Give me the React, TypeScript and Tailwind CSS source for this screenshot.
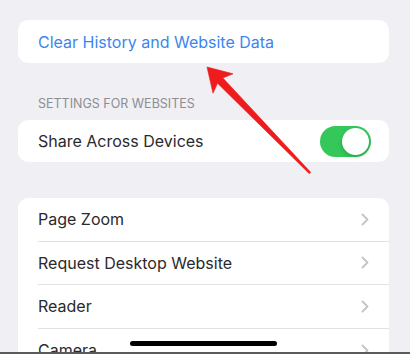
import React from 'react';

const rows = ['Page Zoom', 'Request Desktop Website', 'Reader', 'Camera'];

const Chevron: React.FC = () => (
    <svg width="8" height="13" viewBox="0 0 8 13" fill="none">
        <path d="M1.5 1.5 L6.5 6.5 L1.5 11.5" stroke="#c4c4c8" strokeWidth="1.8" strokeLinecap="round" strokeLinejoin="round"/>
    </svg>
);

const Toggle: React.FC = () => (
    <div className="flex h-[31px] w-[51px] items-center justify-end rounded-full bg-[#34c759] p-[2px]">
        <div className="h-[27px] w-[27px] rounded-full bg-white shadow-[0_2px_4px_rgba(0,0,0,0.18)]"/>
    </div>
);

const App: React.FC = () => {
    return (
        <div className="relative h-[354px] w-[410px] overflow-hidden bg-[#efeff4] font-['Inter','Liberation_Sans',sans-serif] text-[16px] text-[#2a2a2c]">
            <div className="flex flex-col pl-[18px] pr-[21px] pt-[20px]">
                {/* clear data */}
                <div className="flex h-[43px] items-center rounded-[10px] bg-white px-[20px] text-[#3b86ee]">
                    Clear History and Website Data
                </div>

                <div className="mt-[33px] px-[20px] text-[12.5px] leading-[16px] text-[#8d8d92] uppercase">
                    Settings for Websites
                </div>

                <div className="mt-[8px] flex h-[42px] items-center justify-between rounded-[10px] bg-white pl-[20px] pr-[18px]">
                    <span>Share Across Devices</span>
                    <Toggle/>
                </div>

                <div className="mt-[36px] rounded-[10px] bg-white pl-[20px]">
                    {rows.map((row, i) => (
                        <div key={row}
                             className={'flex h-[43.5px] items-center justify-between pr-[20px] ' + (i < rows.length - 1 ? 'border-b border-[#e2e2e5]' : '')}>
                            <span>{row}</span>
                            <Chevron/>
                        </div>
                    ))}
                </div>
            </div>

            {/* markup arrow */}
            <svg className="pointer-events-none absolute left-0 top-0" width="410" height="354" viewBox="0 0 410 354">
                <polygon fill="#ee1c1c" stroke="#ee1c1c" strokeWidth="0.6" strokeLinejoin="round"
                         points="207,67 233,73.8 222.9,78 310.7,172.3 309.3,173.7 217.5,83.2 213,93.2"/>
            </svg>

            {/* home indicator */}
            <div className="absolute left-[130px] top-[341px] h-[5px] w-[147px] rounded-full bg-black"/>
            <div className="absolute bottom-0 left-0 h-[2px] w-full bg-[#5b5b5b]"/>
        </div>
    );
};

export default App;
